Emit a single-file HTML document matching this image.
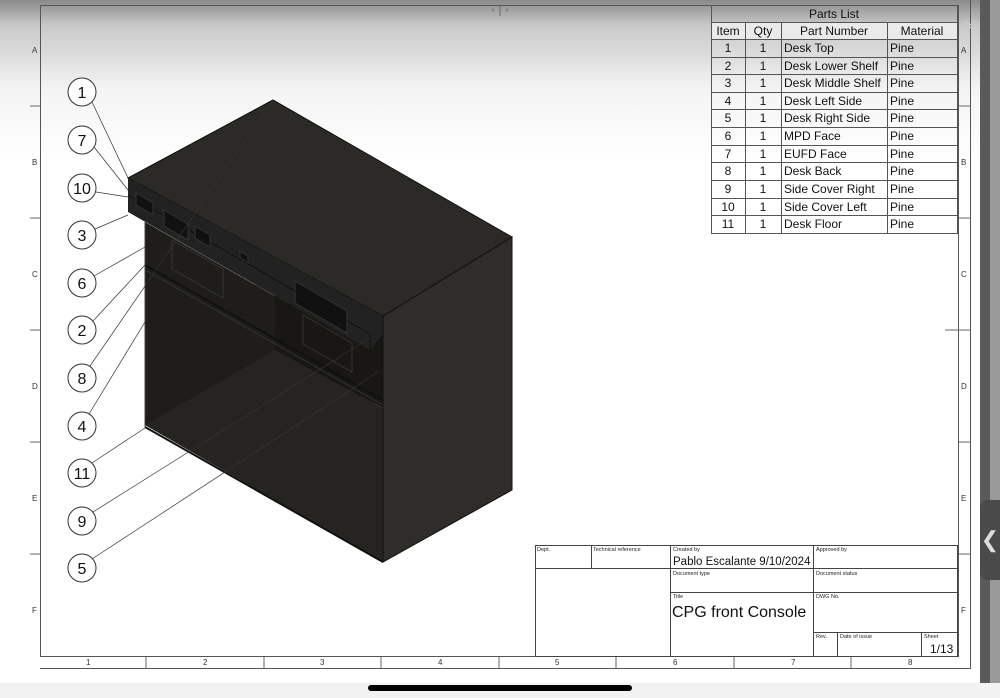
<!DOCTYPE html>
<html><head><meta charset="utf-8"><style>
body{margin:0;width:1000px;height:698px;overflow:hidden;background:#f2f2f2;font-family:"Liberation Sans",sans-serif;position:relative}
.sheet{position:absolute;left:0;top:0;width:980px;height:683px;background:linear-gradient(#8a8a8a 0px,#c8c8c8 25px,#f4f4f4 90px,#fff 160px)}
.t{position:absolute;font-size:7px;color:#222}
</style></head><body>
<div class="sheet"></div>
<div style="position:absolute;left:980px;top:0;width:10px;height:683px;background:#5a5a5a"></div>
<div style="position:absolute;left:990px;top:0;width:10px;height:683px;background:#9a9a9a"></div>
<div style="position:absolute;left:980px;top:500px;width:20px;height:80px;background:#4a4a4a;border-radius:8px 0 0 8px;color:#ddd;font-size:22px;line-height:80px;text-align:center">&#10094;</div>
<div style="position:absolute;left:368px;top:685px;width:264px;height:6px;border-radius:3px;background:#000"></div>
<svg width="1000" height="698" style="position:absolute;left:0;top:0" font-family="Liberation Sans, sans-serif">
<rect x="40.5" y="5.5" width="918" height="651" fill="none" stroke="#555"/>
<line x1="40" y1="668.5" x2="970" y2="668.5" stroke="#555"/>
<line x1="970.5" y1="0" x2="970.5" y2="669" stroke="#555"/>
<g stroke="#666">
<line x1="30" y1="106" x2="40" y2="106"/><line x1="30" y1="218" x2="40" y2="218"/><line x1="30" y1="330" x2="40" y2="330"/><line x1="30" y1="442" x2="40" y2="442"/><line x1="30" y1="554" x2="40" y2="554"/>
<line x1="958" y1="106" x2="970" y2="106"/><line x1="958" y1="218" x2="970" y2="218"/><line x1="945" y1="330" x2="970" y2="330"/><line x1="958" y1="442" x2="970" y2="442"/><line x1="958" y1="554" x2="970" y2="554"/>
<line x1="146" y1="657" x2="146" y2="668"/><line x1="264" y1="657" x2="264" y2="668"/><line x1="381" y1="657" x2="381" y2="668"/><line x1="499" y1="657" x2="499" y2="668"/><line x1="616" y1="657" x2="616" y2="668"/><line x1="734" y1="657" x2="734" y2="668"/><line x1="851" y1="657" x2="851" y2="668"/>
<line x1="500" y1="5" x2="500" y2="16"/>
</g>
<g fill="#333" font-size="8">
<text x="32" y="53">A</text><text x="32" y="165">B</text><text x="32" y="277">C</text><text x="32" y="389">D</text><text x="32" y="501">E</text><text x="32" y="613">F</text>
<text x="961" y="53">A</text><text x="961" y="165">B</text><text x="961" y="277">C</text><text x="961" y="389">D</text><text x="961" y="501">E</text><text x="961" y="613">F</text>
<text x="86" y="665">1</text><text x="203" y="665">2</text><text x="320" y="665">3</text><text x="438" y="665">4</text><text x="555" y="665">5</text><text x="673" y="665">6</text><text x="791" y="665">7</text><text x="908" y="665">8</text>
</g>
<g fill="#888"><circle cx="493" cy="10" r="1.5"/><circle cx="500" cy="10" r="1.5"/><circle cx="507" cy="10" r="1.5"/></g>
<!-- desk -->
<polygon points="145,222 370,350 383,562 145,425" fill="#1e1d1a"/>
<polygon points="145,425 275,350 383,408 383,562" fill="#252420"/>
<polygon points="275,350 275,222 383,290 383,408" fill="#181714"/>
<polygon points="383,316 512,237 512,490 383,562" fill="#2f2d29" stroke="#111"/>
<polygon points="128,178 273,100 512,237 383,316" fill="#2b2a26" stroke="#111"/>
<polygon points="128,178 383,316 383,334 370,350 128,212" fill="#222"/>
<polyline points="128,195 370,334 370,350" fill="none" stroke="#111"/>
<g fill="#111" stroke="#333">
<rect x="0" y="0" width="0" height="0"/>
<polygon points="136,193 153,203 153,215 136,205"/>
<polygon points="164,210 188,224 188,240 164,226"/>
<polygon points="195,226 210,235 210,247 195,238"/>
<polygon points="240,251 248,256 248,263 240,258"/>
<polygon points="295,281 347,311 347,333 295,303"/>
<polygon points="172,240 223,269 223,298 172,269" fill="none"/>
<polygon points="303,315 352,343 352,372 303,344" fill="none"/>
</g>
<line x1="145" y1="265" x2="383" y2="400" stroke="#111" stroke-width="2"/>
<line x1="145" y1="270" x2="383" y2="405" stroke="#333"/>
<line x1="145" y1="222" x2="145" y2="427" stroke="#444"/>
<line x1="145" y1="427" x2="383" y2="562" stroke="#111" stroke-width="2"/>
<line x1="383" y1="316" x2="383" y2="562" stroke="#111"/>
<!-- balloons -->
<g fill="#fff" stroke="#333" stroke-width="1">
<circle cx="82" cy="92" r="14"/><circle cx="82" cy="140" r="14"/><circle cx="82" cy="188" r="14"/><circle cx="82" cy="235" r="14"/><circle cx="82" cy="283" r="14"/><circle cx="82" cy="330" r="14"/><circle cx="82" cy="378" r="14"/><circle cx="82" cy="426" r="14"/><circle cx="82" cy="473" r="14"/><circle cx="82" cy="521" r="14"/><circle cx="82" cy="568" r="14"/>
</g>
<g stroke="#333" stroke-width="0.7" fill="none">
<line x1="92" y1="102" x2="128" y2="178"/><line x1="94" y1="147" x2="128" y2="190"/><line x1="96" y1="192" x2="128" y2="197"/><line x1="95" y1="229" x2="128" y2="215"/><line x1="94" y1="276" x2="145" y2="247"/><line x1="93" y1="321" x2="145" y2="265"/><line x1="90" y1="366" x2="273" y2="100"/><line x1="89" y1="414" x2="145" y2="322"/><line x1="92" y1="463" x2="145" y2="428"/><line x1="93" y1="512" x2="370" y2="338"/><line x1="92" y1="559" x2="378" y2="372"/>
</g>
<g font-size="16" fill="#111" text-anchor="middle">
<text x="82" y="98">1</text><text x="82" y="146">7</text><text x="82" y="194">10</text><text x="82" y="241">3</text><text x="82" y="289">6</text><text x="82" y="336">2</text><text x="82" y="384">8</text><text x="82" y="432">4</text><text x="82" y="479">11</text><text x="82" y="527">9</text><text x="82" y="574">5</text>
</g>
<!-- parts list -->
<rect x="711" y="22" width="246" height="17" fill="#eaeaea"/>
<g stroke="#555" stroke-width="1" fill="none">
<rect x="711.5" y="5.5" width="246" height="228" fill="none"/>
<line x1="711" y1="22.5" x2="957" y2="22.5"/><line x1="711" y1="39.5" x2="957" y2="39.5"/>
<line x1="711" y1="57.5" x2="957" y2="57.5"/><line x1="711" y1="74.5" x2="957" y2="74.5"/><line x1="711" y1="92.5" x2="957" y2="92.5"/><line x1="711" y1="109.5" x2="957" y2="109.5"/><line x1="711" y1="127.5" x2="957" y2="127.5"/><line x1="711" y1="145.5" x2="957" y2="145.5"/><line x1="711" y1="162.5" x2="957" y2="162.5"/><line x1="711" y1="180.5" x2="957" y2="180.5"/><line x1="711" y1="198.5" x2="957" y2="198.5"/><line x1="711" y1="215.5" x2="957" y2="215.5"/>
<line x1="745.5" y1="22" x2="745.5" y2="233"/><line x1="781.5" y1="22" x2="781.5" y2="233"/><line x1="887.5" y1="22" x2="887.5" y2="233"/>
</g>
<g font-size="12" fill="#111">
<text x="834" y="18" text-anchor="middle">Parts List</text>
<text x="728" y="35" text-anchor="middle">Item</text><text x="763" y="35" text-anchor="middle">Qty</text><text x="834" y="35" text-anchor="middle">Part Number</text><text x="922" y="35" text-anchor="middle">Material</text>
<g text-anchor="middle"><text x="728" y="52">1</text><text x="728" y="70">2</text><text x="728" y="87">3</text><text x="728" y="105">4</text><text x="728" y="122">5</text><text x="728" y="140">6</text><text x="728" y="158">7</text><text x="728" y="175">8</text><text x="728" y="193">9</text><text x="728" y="211">10</text><text x="728" y="228">11</text>
<text x="763" y="52">1</text><text x="763" y="70">1</text><text x="763" y="87">1</text><text x="763" y="105">1</text><text x="763" y="122">1</text><text x="763" y="140">1</text><text x="763" y="158">1</text><text x="763" y="175">1</text><text x="763" y="193">1</text><text x="763" y="211">1</text><text x="763" y="228">1</text></g>
<text x="784" y="52">Desk Top</text><text x="784" y="70">Desk Lower Shelf</text><text x="784" y="87">Desk Middle Shelf</text><text x="784" y="105">Desk Left Side</text><text x="784" y="122">Desk Right Side</text><text x="784" y="140">MPD Face</text><text x="784" y="158">EUFD Face</text><text x="784" y="175">Desk Back</text><text x="784" y="193">Side Cover Right</text><text x="784" y="211">Side Cover Left</text><text x="784" y="228">Desk Floor</text>
<text x="890" y="52">Pine</text><text x="890" y="70">Pine</text><text x="890" y="87">Pine</text><text x="890" y="105">Pine</text><text x="890" y="122">Pine</text><text x="890" y="140">Pine</text><text x="890" y="158">Pine</text><text x="890" y="175">Pine</text><text x="890" y="193">Pine</text><text x="890" y="211">Pine</text><text x="890" y="228">Pine</text>
</g>
<!-- title block -->
<g stroke="#444" fill="none">
<rect x="535.5" y="545.5" width="422" height="111"/>
<line x1="535" y1="568.5" x2="957" y2="568.5"/>
<line x1="670" y1="592.5" x2="957" y2="592.5"/>
<line x1="813" y1="632.5" x2="957" y2="632.5"/>
<line x1="591.5" y1="545" x2="591.5" y2="568"/>
<line x1="670.5" y1="545" x2="670.5" y2="657"/>
<line x1="813.5" y1="545" x2="813.5" y2="657"/>
<line x1="837.5" y1="632" x2="837.5" y2="657"/>
<line x1="921.5" y1="632" x2="921.5" y2="657"/>
</g>
<g font-size="5.5" fill="#222">
<text x="537" y="551">Dept.</text><text x="593" y="551">Technical reference</text><text x="673" y="551">Created by</text><text x="816" y="551">Approved by</text>
<text x="673" y="575">Document type</text><text x="816" y="575">Document status</text>
<text x="673" y="598">Title</text><text x="816" y="598">DWG No.</text>
<text x="816" y="638">Rev.</text><text x="840" y="638">Date of issue</text><text x="924" y="638">Sheet</text>
</g>
<text x="673" y="565" font-size="11.5" fill="#111">Pablo Escalante  9/10/2024</text>
<text x="672" y="617" font-size="16" fill="#111">CPG front Console</text>
<text x="930" y="653" font-size="12" fill="#111">1/13</text>
<g stroke="#ccc" stroke-width="1"><path d="M965 20l5 5M975 20l-5 5M965 32l5-5M975 32l-5-5"/></g>
</svg>
</body></html>
